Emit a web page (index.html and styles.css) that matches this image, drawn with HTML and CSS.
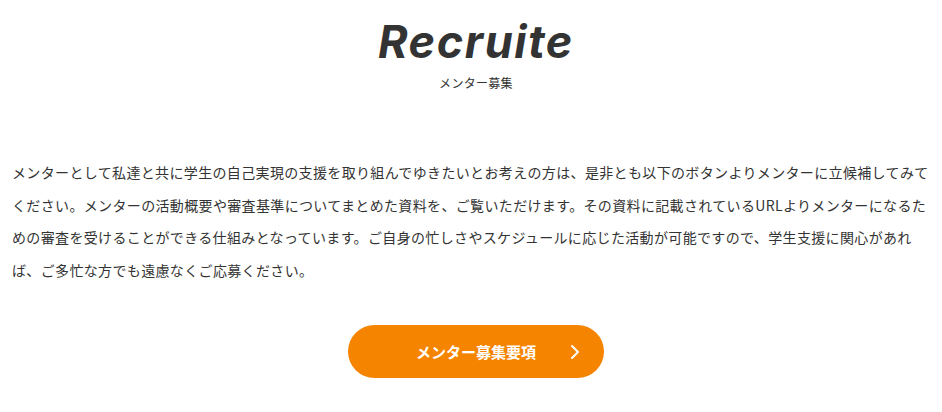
FILE: index.html
```html
<!DOCTYPE html>
<html lang="ja">
<head>
    <meta charset="UTF-8">
    <meta name="viewport" content="width=device-width, initial-scale=1.0">
    <title>Recruite</title>
    <link rel="stylesheet" href="styles.css">
</head>
<body>
    <!-- Recruit section -->
    <section class="recruit">
        <div class="section-title">
            <h2>Recruite</h2>
            <p>メンター募集</p>
        </div>
        <p class="recruit-text">メンターとして私達と共に学生の自己実現の支援を取り組んでゆきたいとお考えの方は、是非とも以下のボタンよりメンターに立候補してみてください。メンターの活動概要や審査基準についてまとめた資料を、ご覧いただけます。その資料に記載されているURLよりメンターになるための審査を受けることができる仕組みとなっています。ご自身の忙しさやスケジュールに応じた活動が可能ですので、学生支援に関心があれば、ご多忙な方でも遠慮なくご応募ください。</p>
        <div class="recruit-btn-wrap">
            <a href="#" class="recruit-btn">
                <span>メンター募集要項</span>
                <svg class="arrow" width="10" height="16" viewBox="0 0 10 16">
                    <path d="M2 2 L8 8 L2 14" fill="none" stroke="#fff" stroke-width="2" stroke-linecap="round" stroke-linejoin="round"/>
                </svg>
            </a>
        </div>
    </section>
</body>
</html>
```

FILE: styles.css
```css
/* General styling */
body {
    margin: 0;
    padding: 0;
    background-color: #ffffff;
    color: #333333;
    font-family: "Noto Sans CJK JP", "Noto Sans", sans-serif;
}
.recruit {
    padding: 12px 2px 0 12px;
}
/* Title */
.section-title {
    text-align: center;
}
.section-title h2 {
    margin: 0;
    font-family: "Inter", sans-serif;
    font-style: italic;
    font-weight: 700;
    font-size: 45px;
    line-height: 60px;
    color: #333333;
    letter-spacing: 1.6px;
}
.section-title p {
    margin: 2px 0 0;
    font-size: 12px;
    line-height: 18px;
    letter-spacing: 0.3px;
    color: #333333;
}
/* Body text */
.recruit-text {
    margin: 64px 0 0;
    font-size: 14px;
    line-height: 32.5px;
    letter-spacing: 0.35px;
    color: #333333;
}
/* Button */
.recruit-btn-wrap {
    display: flex;
    justify-content: center;
    margin-top: 39px;
}
.recruit-btn {
    position: relative;
    display: flex;
    align-items: center;
    justify-content: center;
    width: 256px;
    height: 53px;
    background-color: #f58400;
    border-radius: 27px;
    color: #ffffff;
    font-weight: bold;
    font-size: 15px;
    text-decoration: none;
}
.recruit-btn .arrow {
    position: absolute;
    right: 24px;
    top: 19px;
}
```
